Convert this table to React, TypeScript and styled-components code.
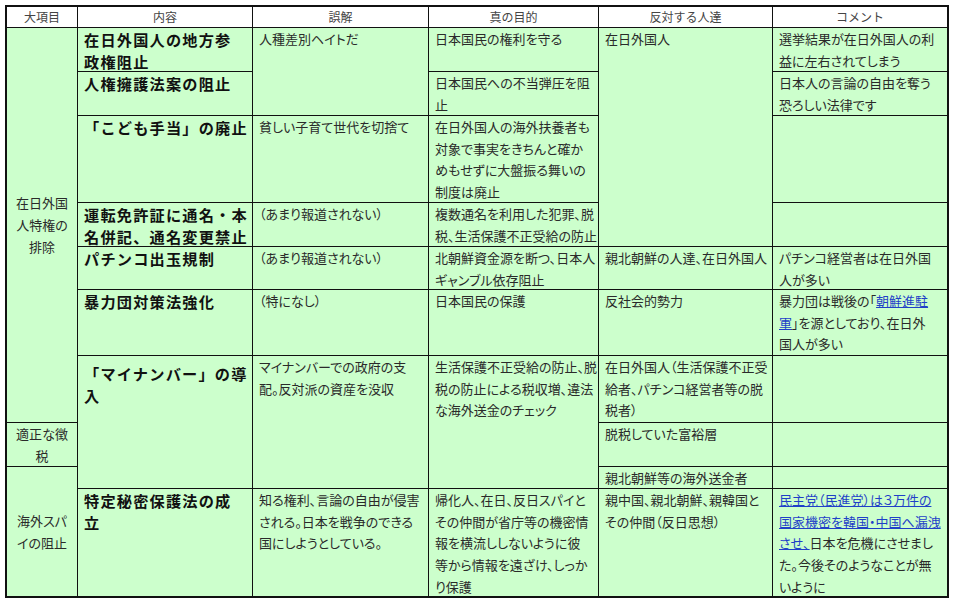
import React from 'react';
import styled, { createGlobalStyle } from 'styled-components';

const GlobalStyle = createGlobalStyle`
  html, body {
    margin: 0;
    background: #fff;
  }
  body {
    font-family: "Noto Sans CJK JP", "Noto Sans", sans-serif;
  }
`;

const Page = styled.div`
  padding: 5px 0 0 5px;
`;

const Grid = styled.div`
  display: grid;
  width: fit-content;
  grid-template-columns: 71px 175px 176px 170px 174px 175px;
  grid-template-rows: 21px 44px 44px 87px 44px 43px 66px 67px 44px 22px 108px;
  border-top: 2px solid #111;
  border-left: 2px solid #111;
  border-right: 1px solid #111;
  border-bottom: 1px solid #111;
`;

const Cell = styled.div<{ $col: number; $row: number; $span?: number }>`
  grid-column: ${(p) => p.$col};
  grid-row: ${(p) => p.$row} / span ${(p) => p.$span ?? 1};
  box-sizing: border-box;
  border-right: 1px solid #111;
  border-bottom: 1px solid #111;
  background: #ccffcc;
  color: #2a2a2a;
  font-size: 13px;
  line-height: 21.7px;
  padding: 0 5px 0 6px;
  white-space: pre;
  font-feature-settings: "palt";
`;

const HeadCell = styled(Cell)`
  background: #fff;
  color: #444;
  font-size: 12px;
  line-height: 20px;
  text-align: center;
  padding: 0;
  font-feature-settings: normal;
`;

const GroupCell = styled(Cell)`
  display: flex;
  flex-direction: column;
  align-items: center;
  justify-content: center;
  text-align: center;
  padding: 0 4px;
  line-height: 22px;
`;

const TitleCell = styled(Cell)<{ $top?: number }>`
  color: #111;
  font-size: 15.2px;
  font-weight: 700;
  line-height: 22px;
  letter-spacing: 1.2px;
  padding: ${(p) => p.$top ?? 0}px 4px 0 6px;
  font-feature-settings: normal;
`;

const Line = styled.div`
  white-space: pre;
`;

const Link = styled.a`
  color: #1f3fc8;
  text-decoration: underline;
`;

const headers = ['大項目', '内容', '誤解', '真の目的', '反対する人達', 'コメント'];

type Item = { row: number; span?: number; lines?: React.ReactNode[]; top?: number };

const groups: Item[] = [
  { row: 2, span: 7, lines: ['在日外国', '人特権の', '排除'] },
  { row: 9, lines: ['適正な徴', '税'] },
  { row: 10, span: 2, lines: ['海外スパ', 'イの阻止'] },
];

const titles: Item[] = [
  { row: 2, lines: ['在日外国人の地方参', '政権阻止'] },
  { row: 3, lines: ['人権擁護法案の阻止'] },
  { row: 4, lines: ['「こども手当」の廃止'] },
  { row: 5, lines: ['運転免許証に通名・本', '名併記、通名変更禁止'] },
  { row: 6, lines: ['パチンコ出玉規制'] },
  { row: 7, lines: ['暴力団対策法強化'] },
  { row: 8, span: 3, lines: ['「マイナンバー」の導', '入'], top: 6 },
  { row: 11, lines: ['特定秘密保護法の成', '立'] },
];

const myths: Item[] = [
  { row: 2, span: 2, lines: ['人種差別ヘイトだ'] },
  { row: 4, lines: ['貧しい子育て世代を切捨て'] },
  { row: 5, lines: ['（あまり報道されない）'] },
  { row: 6, lines: ['（あまり報道されない）'] },
  { row: 7, lines: ['（特になし）'] },
  { row: 8, span: 3, lines: ['マイナンバーでの政府の支', '配。反対派の資産を没収'] },
  { row: 11, lines: ['知る権利、言論の自由が侵害', 'される。日本を戦争のできる', '国にしようとしている。'] },
];

const purposes: Item[] = [
  { row: 2, lines: ['日本国民の権利を守る'] },
  { row: 3, lines: ['日本国民への不当弾圧を阻', '止'] },
  { row: 4, lines: ['在日外国人の海外扶養者も', '対象で事実をきちんと確か', 'めもせずに大盤振る舞いの', '制度は廃止'] },
  { row: 5, lines: ['複数通名を利用した犯罪、脱', '税、生活保護不正受給の防止'] },
  { row: 6, lines: ['北朝鮮資金源を断つ、日本人', 'ギャンブル依存阻止'] },
  { row: 7, lines: ['日本国民の保護'] },
  { row: 8, span: 3, lines: ['生活保護不正受給の防止、脱', '税の防止による税収増、違法', 'な海外送金のチェック'] },
  {
    row: 11,
    lines: ['帰化人、在日、反日スパイと', 'その仲間が省庁等の機密情', '報を横流ししないように彼', '等から情報を遠ざけ、しっか', 'り保護'],
  },
];

const opponents: Item[] = [
  { row: 2, span: 4, lines: ['在日外国人'] },
  { row: 6, lines: ['親北朝鮮の人達、在日外国人'] },
  { row: 7, lines: ['反社会的勢力'] },
  { row: 8, lines: ['在日外国人（生活保護不正受', '給者、パチンコ経営者等の脱', '税者）'] },
  { row: 9, lines: ['脱税していた富裕層'] },
  { row: 10, lines: ['親北朝鮮等の海外送金者'] },
  { row: 11, lines: ['親中国、親北朝鮮、親韓国と', 'その仲間（反日思想）'] },
];

const comments: Item[] = [
  { row: 2, lines: ['選挙結果が在日外国人の利', '益に左右されてしまう'] },
  { row: 3, lines: ['日本人の言論の自由を奪う', '恐ろしい法律です'] },
  { row: 4 },
  { row: 5 },
  { row: 6, lines: ['パチンコ経営者は在日外国', '人が多い'] },
  {
    row: 7,
    lines: [
      <>暴力団は戦後の「<Link href="#">朝鮮進駐</Link></>,
      <><Link href="#">軍</Link>」を源としており、在日外</>,
      '国人が多い',
    ],
  },
  { row: 8 },
  { row: 9 },
  { row: 10 },
  {
    row: 11,
    lines: [
      <Link href="#">民主党（民進党）は３万件の</Link>,
      <Link href="#">国家機密を韓国・中国へ漏洩</Link>,
      <><Link href="#">させ、</Link>日本を危機にさせまし</>,
      'た。今後そのようなことが無',
      'いように',
    ],
  },
];

const renderLines = (lines?: React.ReactNode[]) =>
  lines?.map((l, i) => <Line key={i}>{l}</Line>);

const App = () => {
  return (
    <Page>
      <GlobalStyle />
      <Grid>
        {headers.map((h, i) => (
          <HeadCell key={h} $col={i + 1} $row={1}>
            {h}
          </HeadCell>
        ))}
        {groups.map((g) => (
          <GroupCell key={`g${g.row}`} $col={1} $row={g.row} $span={g.span}>
            {renderLines(g.lines)}
          </GroupCell>
        ))}
        {titles.map((t) => (
          <TitleCell key={`t${t.row}`} $col={2} $row={t.row} $span={t.span} $top={t.top}>
            {renderLines(t.lines)}
          </TitleCell>
        ))}
        {[myths, purposes, opponents, comments].map((list, c) =>
          list.map((it) => (
            <Cell key={`${c}-${it.row}`} $col={c + 3} $row={it.row} $span={it.span}>
              {renderLines(it.lines)}
            </Cell>
          )),
        )}
      </Grid>
    </Page>
  );
};

export default App;
